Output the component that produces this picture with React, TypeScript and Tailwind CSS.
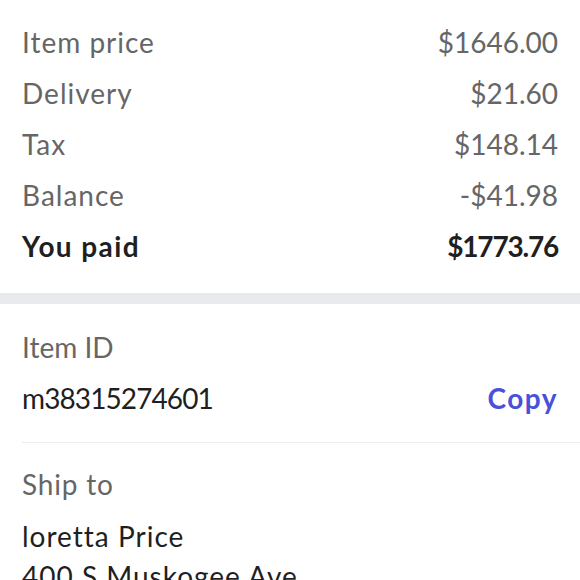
const rows = [
  { label: "Item price", value: "$1646.00" },
  { label: "Delivery", value: "$21.60" },
  { label: "Tax", value: "$148.14" },
  { label: "Balance", value: "-$41.98" },
]

export default function App() {
  return (
    <div className="w-[580px] h-[580px] overflow-hidden bg-white font-['Lato',sans-serif] text-[28px]">
      <div className="px-[22px] pt-[16px] pb-[22px]">
        {rows.map((r) => (
          <div key={r.label} className="flex h-[51px] items-center justify-between text-[#666666]">
            <span className="tracking-[1px]">{r.label}</span>
            <span>{r.value}</span>
          </div>
        ))}
        <div className="flex h-[51px] items-center justify-between font-bold text-[#1f1f1f]">
          <span className="tracking-[1.4px]">You paid</span>
          <span className="tracking-[-1.2px]">$1773.76</span>
        </div>
      </div>

      <div className="h-[11px] bg-[#e9eaee]" />

      <div className="pl-[22px] pt-[17px]">
        <div className="flex h-[51px] items-center text-[#666666]">Item ID</div>
        <div className="flex h-[51px] items-center justify-between pr-[22px] text-[#1f1f1f]">
          <span className="tracking-[-0.9px]">m38315274601</span>
          <button className="font-bold tracking-[1.5px] text-[#4b50d8]">Copy</button>
        </div>
        <div className="mt-[19px] h-px bg-[#ececec]" />
        <div className="mt-[15px] flex h-[51px] items-center tracking-[0.8px] text-[#666666]">Ship to</div>
        <div className="mt-[7px] tracking-[1px] leading-[40px] text-[#1f1f1f]">
          <div>loretta Price</div>
          <div>400 S Muskogee Ave</div>
        </div>
      </div>
    </div>
  )
}
